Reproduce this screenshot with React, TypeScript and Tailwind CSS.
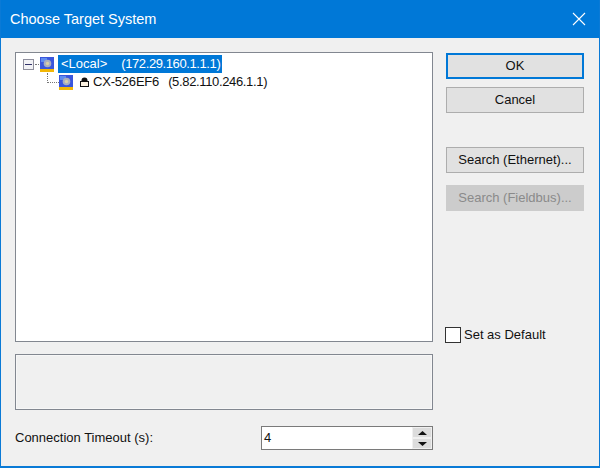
function SystemIcon() {
  return (
    <svg width="14" height="15" viewBox="0 0 14 15" className="shrink-0">
      <rect x="0" y="0" width="14" height="12" fill="#3a56dc" />
      <rect x="1" y="1" width="6" height="4" fill="#5f8cf0" />
      <rect x="0" y="12" width="14" height="3" fill="#f2b705" />
      <circle cx="7.500" cy="6.500" r="3.800" fill="#a9adc0" />
      <circle cx="7.500" cy="6.500" r="1.700" fill="#d8cfa8" />
    </svg>
  )
}

function LockIcon() {
  return (
    <svg width="9" height="10" viewBox="0 0 9 10" className="shrink-0 block">
      <path d="M1.500 5V3.500a3 3 0 0 1 6 0V5z" fill="#111" />
      <rect x="0.500" y="4.500" width="8" height="5" fill="#fdf3e2" stroke="#111" />
    </svg>
  )
}

function Button({ label, primary, disabled, className }: { label: string; primary?: boolean; disabled?: boolean; className?: string }) {
  const border = primary
    ? 'border-2 border-[#0078d7] bg-[#e1e1e1] text-[#111]'
    : disabled
      ? 'border border-[#cccccc] bg-[#cccccc] text-[#8a8a8a]'
      : 'border border-[#adadad] bg-[#e1e1e1] text-[#111]'
  return (
    <div className={`flex items-center justify-center w-[138px] h-[26px] text-[13px] ${border} ${className ?? ''}`}>
      {label}
    </div>
  )
}

export default function App() {
  return (
    <div className="w-[600px] h-[468px] overflow-hidden flex flex-col bg-[#f0f0f0] border-x border-b-2 border-[#0a7ad6] font-['Liberation_Sans',Arial,sans-serif] text-[13px] text-[#111]">
      <div className="h-[38px] shrink-0 -mx-px bg-[#0078d7] flex items-center justify-between pl-[10px] pr-[14px] text-white">
        <span className="text-[14.5px] pt-px">Choose Target System</span>
        <svg width="14" height="14" viewBox="0 0 14 14" fill="none" stroke="#ffffff" strokeWidth="1.1">
          <path d="M1 1l12 12M13 1L1 13" />
        </svg>
      </div>

      <div className="flex-1 flex pl-[14px] pt-[14px]">
        <div className="w-[418px] shrink-0 flex flex-col">
          <div className="h-[290px] border border-[#828790] bg-white pl-[7px] pt-[2px]">
            <div className="flex items-center h-[18px]">
              <div className="w-[11px] h-[11px] border border-[#8f8f9d] bg-[#f2f2f5] flex items-center justify-center shrink-0">
                <div className="w-[7px] h-px bg-[#33336a]" />
              </div>
              <div className="w-[4px] mx-px border-t border-dotted border-[#777]" />
              <SystemIcon />
              <span className="ml-[4px] h-[18px] pl-[3px] pr-[2px] bg-[#0078d7] text-white flex items-center whitespace-pre">
                {'<Local>'}
                <span className="ml-[14px] tracking-[-0.4px]">(172.29.160.1.1.1)</span>
              </span>
            </div>
            <div className="flex items-center h-[18px] pl-[24px]">
              <div className="w-[12px] h-[10px] self-start shrink-0 border-l border-b border-dotted border-[#777]" />
              <SystemIcon />
              <span className="ml-[7px]"><LockIcon /></span>
              <span className="ml-[4px] tracking-[-0.2px]">CX-526EF6</span>
              <span className="ml-[9px] tracking-[-0.35px]">(5.82.110.246.1.1)</span>
            </div>
          </div>

          <div className="mt-[12px] h-[56px] border border-[#828790] shadow-[inset_0_0_0_1px_#f7f7f7]" />

          <div className="mt-[16px] flex items-center h-[24px]">
            <span className="w-[246px]">Connection Timeout (s):</span>
            <div className="flex-1 h-[24px] border border-[#7a7a7a] bg-white flex items-center justify-between">
              <span className="pl-[2px]">4</span>
              <div className="w-[20px] h-[22px] flex flex-col gap-[2px] bg-[#f0f0f0] p-px">
                <div className="flex-1 bg-[#dcdcdc] flex items-center justify-center">
                  <svg width="9" height="4" viewBox="0 0 9 4"><path d="M4.500 0L9 4H0z" fill="#111" /></svg>
                </div>
                <div className="flex-1 bg-[#dcdcdc] flex items-center justify-center">
                  <svg width="9" height="4" viewBox="0 0 9 4"><path d="M0 0h9L4.500 4z" fill="#111" /></svg>
                </div>
              </div>
            </div>
          </div>
        </div>

        <div className="ml-[13px] flex flex-col pt-px">
          <Button label="OK" primary />
          <Button label="Cancel" className="mt-[8px]" />
          <Button label="Search (Ethernet)..." className="mt-[34px]" />
          <Button label="Search (Fieldbus)..." disabled className="mt-[12px]" />
          <div className="mt-[114px] -ml-px flex items-center">
            <div className="w-[16px] h-[16px] border border-[#333] bg-white" />
            <span className="ml-[3px]">Set as Default</span>
          </div>
        </div>
      </div>
    </div>
  )
}
